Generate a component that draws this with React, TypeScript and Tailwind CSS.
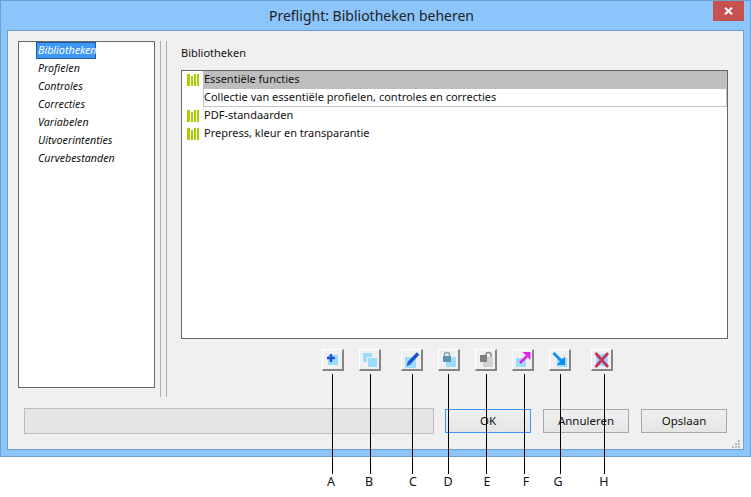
import React from "react";

const nav = ["Bibliotheken", "Profielen", "Controles", "Correcties", "Variabelen", "Uitvoerintenties", "Curvebestanden"];

function Bars() {
  return (
    <svg width="13" height="12" viewBox="0 0 13 12" className="shrink-0">
      <rect x="0" y="0" width="3" height="12" fill="#a6ce00" />
      <rect x="4" y="2" width="2" height="10" fill="#a6ce00" />
      <rect x="7" y="0" width="2" height="12" fill="#a6ce00" />
      <rect x="10" y="0" width="2" height="12" fill="#a6ce00" />
    </svg>
  );
}

function ToolButton({ children, className = "" }: { children: React.ReactNode; className?: string }) {
  return (
    <div className={`w-[22px] h-[22px] bg-[#f0f0f0] border-t border-l border-t-white border-l-white border-r-2 border-b-2 border-r-[#858585] border-b-[#858585] shrink-0 ${className}`}>
      <svg width="20" height="20" viewBox="0 0 20 20" className="block">{children}</svg>
    </div>
  );
}

const lines = [
  { x: 332, l: "A", c: 331 },
  { x: 370, l: "B", c: 369 },
  { x: 412, l: "C", c: 413 },
  { x: 448, l: "D", c: 448 },
  { x: 486, l: "E", c: 487 },
  { x: 524, l: "F", c: 526 },
  { x: 560, l: "G", c: 558 },
  { x: 604, l: "H", c: 604 },
];

function DialogButton({ label, className = "" }: { label: string; className?: string }) {
  return (
    <div className={`w-[86px] h-[24px] flex items-center justify-center border bg-gradient-to-b from-[#f0f0f0] to-[#e5e5e5] text-[11.5px] text-[#111] ${className}`}>
      {label}
    </div>
  );
}

export default function App() {
  return (
    <div className="relative w-[751px] h-[497px] bg-white overflow-hidden font-['Noto_Sans','Open_Sans',sans-serif] text-[#111]">
      <div className="w-[751px] h-[457px] flex flex-col bg-[#8cc5fb] border border-[#6f9fcb]">
        <div className="relative h-[29px] shrink-0 flex items-center justify-center text-[14px] text-[#222] pr-[8px]">
          Preflight: Bibliotheken beheren
          <div className="absolute right-[6px] top-0 w-[31px] h-[20px] bg-[#c75050] flex items-center justify-center">
            <svg width="9" height="8" viewBox="0 0 9 8"><path d="M1 0.8 L8 7.2 M8 0.8 L1 7.2" stroke="#fff" strokeWidth="2" /></svg>
          </div>
        </div>
        <div className="relative flex-1 ml-[6px] mr-[6px] mb-[6px] bg-[#f0f0f0] border border-[#6f9fcb] flex flex-col pl-[10px] pt-[10px] pr-[15px]">
          <div className="flex h-[356px]">
            <div className="w-[137px] h-[347px] bg-white border border-[#666] pl-[17px] italic text-[10.7px] shrink-0">
              {nav.map((n, i) => (
                <div key={n} className="h-[18px] flex items-center">
                  <span className={i === 0 ? "w-[60px] whitespace-nowrap bg-[#3f97f5] text-white border border-[#1f5fa8] h-[17px] leading-[14px] pl-[1px] -mt-[1px]" : "pl-[2px] pb-[2px]"}>{n}</span>
                </div>
              ))}
            </div>
            <div className="w-[1px] h-[356px] ml-[5px] bg-[#adadad] shrink-0"></div>
            <div className="w-[1px] h-[356px] ml-[5px] bg-[#adadad] shrink-0"></div>
            <div className="ml-[14px] flex-1 flex flex-col">
              <div className="h-[29px] text-[11px] flex items-center pb-[4px]">Bibliotheken</div>
              <div className="w-[547px] h-[269px] bg-white border border-[#666] text-[11px] shrink-0">
                <div className="flex items-center h-[18px]">
                  <div className="w-[21px] pl-[5px] flex"><Bars /></div>
                  <div className="flex-1 h-[18px] bg-[#bebebe] pl-[1px] pb-[2px] flex items-center">Essentiële functies</div>
                </div>
                <div className="ml-[21px] h-[18px] bg-white border-r border-b border-l border-[#c4c4c4] flex items-center pb-[1px]">
                  Collectie van essentiële profielen, controles en correcties
                </div>
                <div className="flex items-center h-[18px]">
                  <div className="w-[21px] pl-[5px] flex"><Bars /></div>
                  <div className="pl-[1px] pb-[2px]">PDF-standaarden</div>
                </div>
                <div className="flex items-center h-[18px]">
                  <div className="w-[21px] pl-[5px] flex"><Bars /></div>
                  <div className="pl-[1px] pb-[2px]">Prepress, kleur en transparantie</div>
                </div>
              </div>
              <div className="flex mt-[10px] pl-[141px]">
                <ToolButton>
                  <rect x="5" y="5" width="10" height="10" fill="#9bdcfd" />
                  <path d="M8 4 V12 M4 8 H12" stroke="#1b4fd8" strokeWidth="2.4" />
                </ToolButton>
                <ToolButton className="ml-[15px]">
                  <rect x="3" y="3" width="9" height="9" fill="#9bdcfd" />
                  <rect x="7" y="7" width="10" height="10" fill="#f0f0f0" />
                  <rect x="8" y="8" width="9" height="9" fill="#9bdcfd" />
                </ToolButton>
                <ToolButton className="ml-[20px]">
                  <rect x="3" y="7" width="11" height="11" fill="#9bdcfd" />
                  <path d="M7 13 L16 3.5" stroke="#1b4fd8" strokeWidth="3.4" />
                  <path d="M4.5 16 L5.8 11.8 L8.5 14.5 Z" fill="#1b4fd8" />
                </ToolButton>
                <ToolButton className="ml-[15px]">
                  <rect x="7" y="7" width="10" height="10" fill="#9bdcfd" />
                  <path d="M5.5 6 V4.5 Q5.5 2.5 8 2.5 Q10.5 2.5 10.5 4.5 V6" fill="none" stroke="#7fa3b5" strokeWidth="1.5" />
                  <rect x="4" y="6" width="8" height="6" fill="#5f93aa" />
                </ToolButton>
                <ToolButton className="ml-[15px]">
                  <rect x="7" y="7" width="10" height="10" fill="#d2d2d2" />
                  <path d="M10 5.5 V4.5 Q10 2.5 12.5 2.5 Q15 2.5 15 4.5 V7" fill="none" stroke="#8c8c8c" strokeWidth="1.5" />
                  <rect x="4" y="5" width="7" height="7" fill="#808080" />
                </ToolButton>
                <ToolButton className="ml-[15px]">
                  <rect x="3" y="8" width="10" height="9" fill="#9bdcfd" />
                  <path d="M7 13 L14 6" stroke="#dd22ee" strokeWidth="2.6" />
                  <path d="M9.5 2 H17.5 V10 Z" fill="#dd22ee" />
                </ToolButton>
                <ToolButton className="ml-[15px]">
                  <rect x="7" y="8" width="10" height="9" fill="#9bdcfd" />
                  <path d="M3.5 3 L12 11.5" stroke="#0a8cf5" strokeWidth="2.6" />
                  <path d="M6.5 15 H15 V6.5 Z" fill="#0a8cf5" />
                </ToolButton>
                <ToolButton className="ml-[20px]">
                  <rect x="4" y="4" width="12" height="12" fill="#9bdcfd" />
                  <path d="M3.5 3 L16 17 M16 3 L3.5 17" stroke="#c9305f" strokeWidth="2.8" />
                </ToolButton>
              </div>
            </div>
          </div>
          <div className="flex items-center ml-[6px] mt-[11px]">
            <div className="w-[410px] h-[26px] bg-[#e5e5e5] border border-[#bcbcbc]"></div>
            <DialogButton label="OK" className="ml-[11px] border-[#3a96f0]" />
            <DialogButton label="Annuleren" className="ml-[12px] border-[#a8a8a8]" />
            <DialogButton label="Opslaan" className="ml-[12px] border-[#a8a8a8]" />
          </div>
          {/* resize grip */}
          <svg width="8" height="8" viewBox="0 0 8 8" className="absolute right-[3px] bottom-[1px]">
            <rect x="6" y="0" width="2" height="2" fill="#b8b8b8" />
            <rect x="3" y="3" width="2" height="2" fill="#b8b8b8" />
            <rect x="6" y="3" width="2" height="2" fill="#b8b8b8" />
            <rect x="0" y="6" width="2" height="2" fill="#b8b8b8" />
            <rect x="3" y="6" width="2" height="2" fill="#b8b8b8" />
            <rect x="6" y="6" width="2" height="2" fill="#b8b8b8" />
          </svg>
        </div>
      </div>
      {/* callout annotations over the dialog */}
      {lines.map((ln) => (
        <React.Fragment key={ln.l}>
          <div className="absolute top-[374px] w-[1px] h-[100px] bg-black" style={{ left: ln.x }}></div>
          <div className="absolute top-[473px] w-[20px] text-center text-[12.5px] text-[#111]" style={{ left: ln.c - 10 }}>{ln.l}</div>
        </React.Fragment>
      ))}
    </div>
  );
}
